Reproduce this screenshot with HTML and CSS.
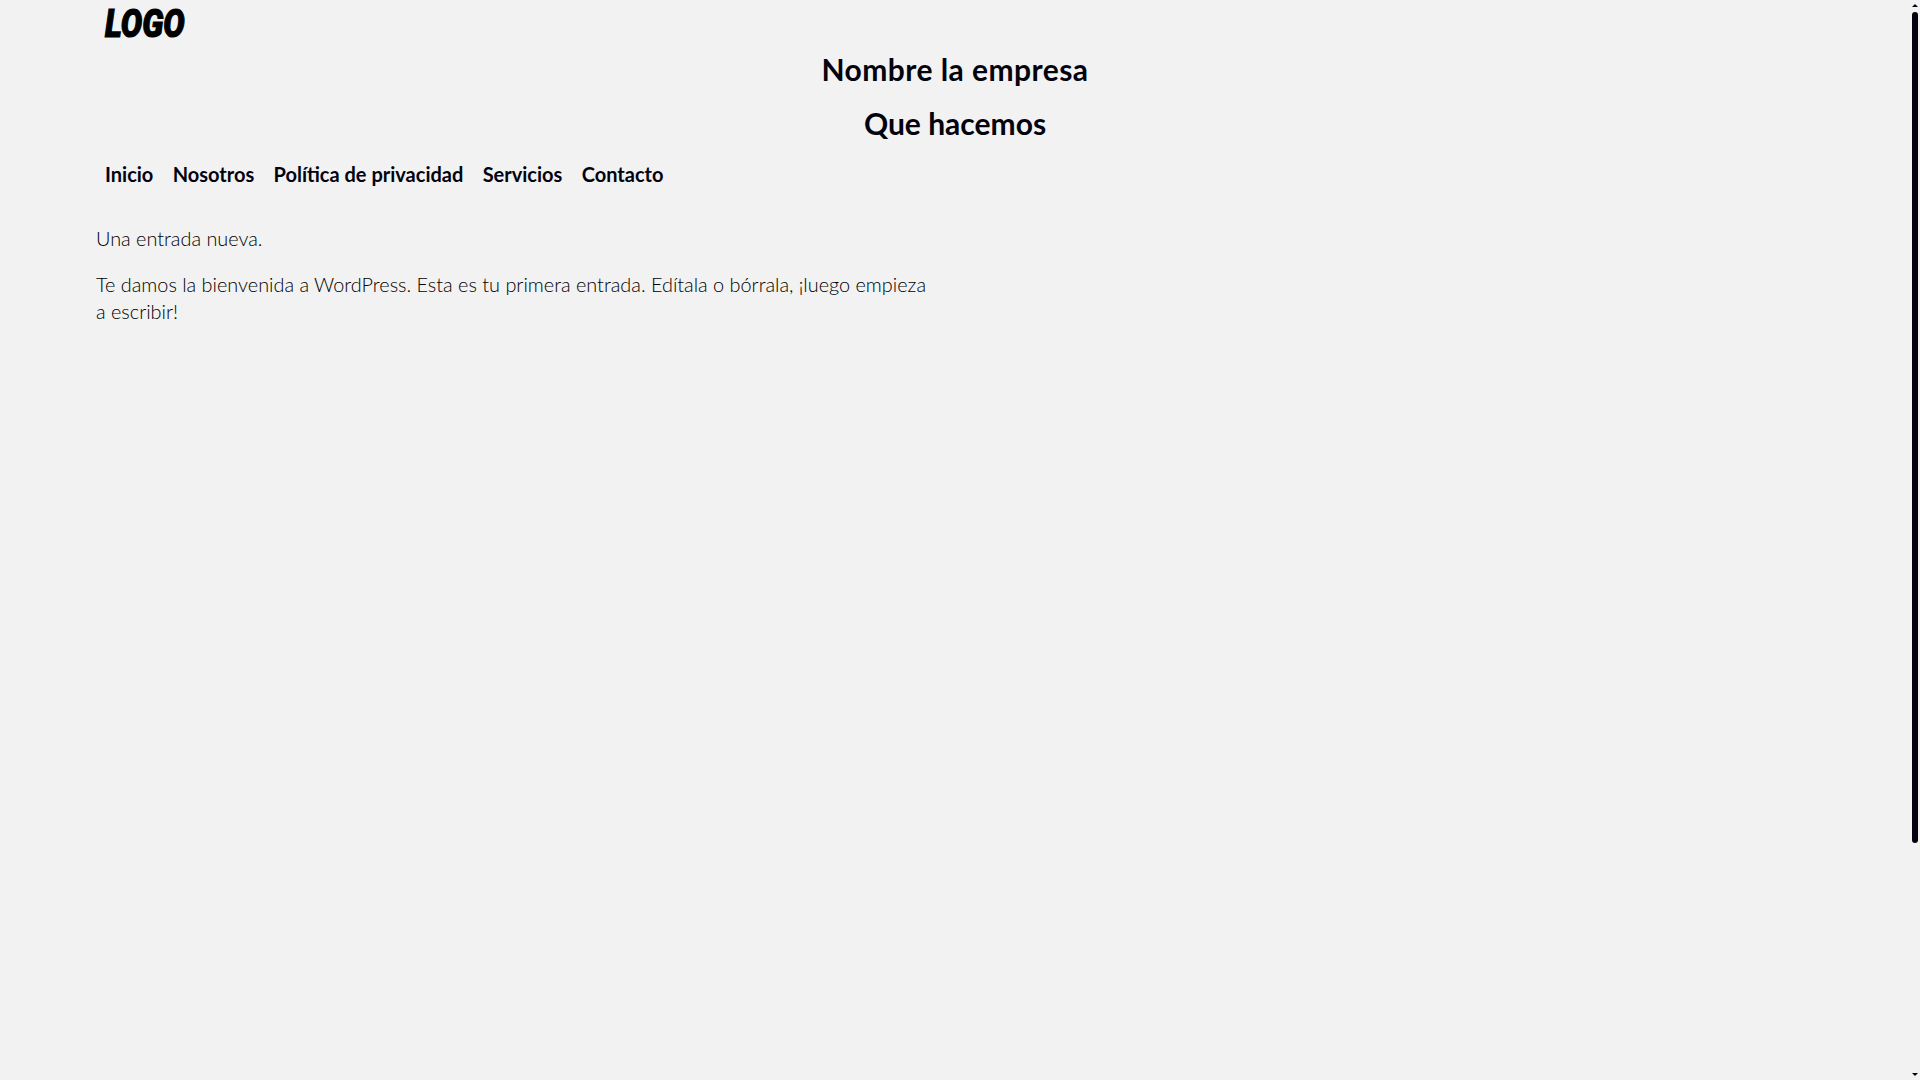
FILE: index.html
```html
<!DOCTYPE html>
<html lang="es">
<head>
<meta charset="utf-8">
<title>Nombre la empresa</title>
<link rel="stylesheet" href="styles.css">
</head>
<body>
<header class="site-header">
  <div class="logo-row"><a class="logo" href="#"><span class="logo-text">LOGO</span></a></div>
  <h1 class="site-title">Nombre la empresa</h1>
  <h2 class="site-tagline">Que hacemos</h2>
  <nav class="main-nav">
    <a href="#">Inicio</a>
    <a href="#">Nosotros</a>
    <a href="#">Política de privacidad</a>
    <a href="#">Servicios</a>
    <a href="#">Contacto</a>
  </nav>
</header>
<main class="content">
  <p>Una entrada nueva.</p>
  <p>Te damos la bienvenida a WordPress. Esta es tu primera entrada. Edítala o bórrala, ¡luego empieza a escribir!</p>
</main>
<div class="scrollbar" aria-hidden="true">
  <svg class="arrow" viewBox="0 0 6 3"><path d="M0 3 L3 0 L6 3Z"/></svg>
  <div class="thumb-track"><div class="thumb"></div></div>
  <svg class="arrow" viewBox="0 0 6 3"><path d="M0 0 L6 0 L3 3Z"/></svg>
</div>
</body>
</html>
```
FILE: styles.css
```css
html, body { margin: 0; padding: 0; height: 100%; overflow: hidden; }
body {
  background: #f2f2f2;
  color: #000;
  font-family: Lato, "Noto Sans", sans-serif;
}
a { color: inherit; text-decoration: none; }
.site-header { width: 1910px; color: #02030f; }
.logo-row { padding: 11px 0 0 105px; height: 35px; box-sizing: border-box; }
.logo { display: inline-block; }
.logo-text {
  display: inline-block;
  font-family: Roboto, "Liberation Sans", sans-serif;
  font-weight: 900;
  font-style: italic;
  font-size: 38px;
  line-height: 27px;
  color: #000;
  -webkit-text-stroke: 1.2px #000;
  transform: scaleX(0.84);
  transform-origin: left center;
}
.site-title, .site-tagline {
  margin: 0;
  text-align: center;
  font-size: 30px;
  font-weight: 700;
  line-height: 54px;
}
.site-title { margin-top: 7px; letter-spacing: 0.45px; }
.main-nav { display: flex; gap: 19.3px; padding: 11px 0 0 105px; font-size: 20px; font-weight: 700; line-height: 27px; }
.content { width: 835px; margin: 37px 0 0 96px; font-size: 19.86px; font-weight: 300; line-height: 27.5px; }
.content p { margin: 0 0 18px; }
.scrollbar { position: fixed; top: 0; right: 2px; bottom: 0; width: 6px; display: flex; flex-direction: column; align-items: center; padding: 4px 0; box-sizing: border-box; }
.arrow { width: 6px; height: 3px; fill: #02030f; flex: none; }
.thumb-track { flex: 1; padding-top: 5px; }
.thumb { width: 6px; height: 831px; background: #02030f; border-radius: 3px; }
```
